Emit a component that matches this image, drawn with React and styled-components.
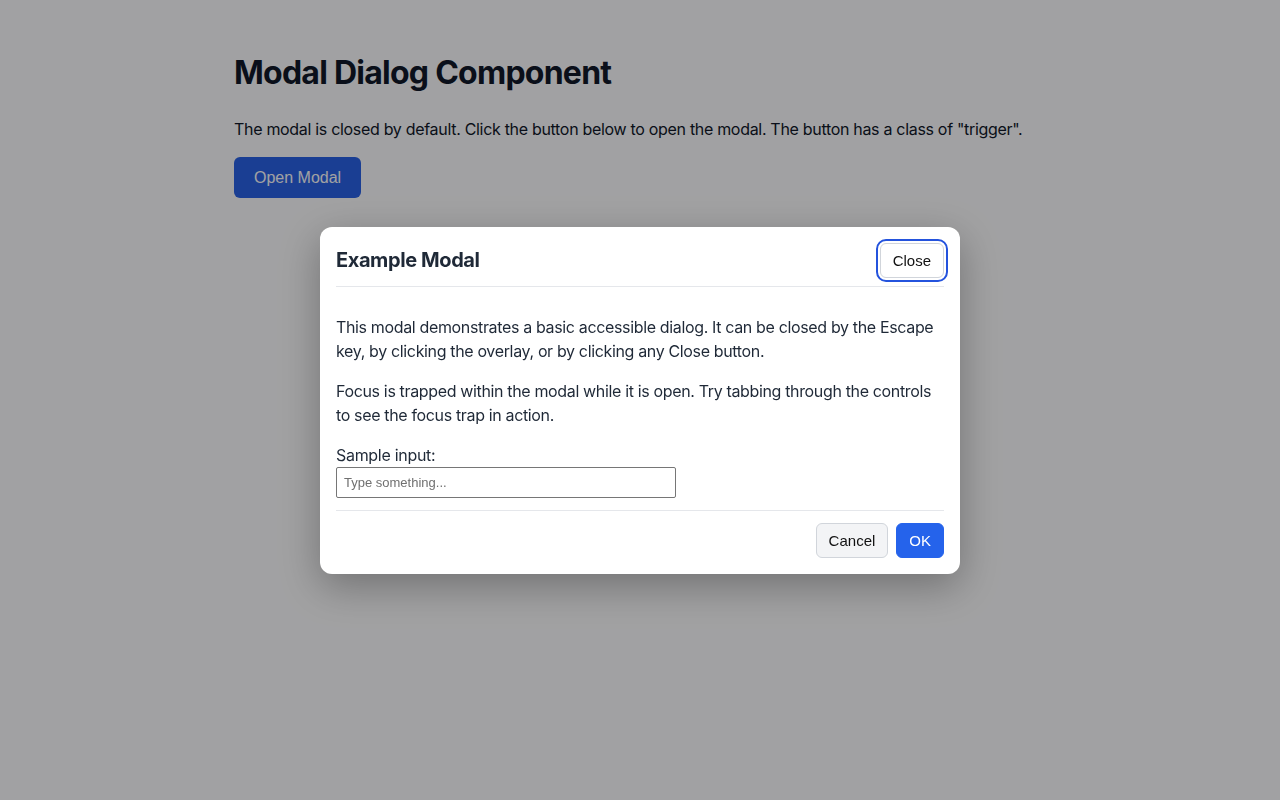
import React from "react";
import styled, { createGlobalStyle } from "styled-components";

const GlobalStyle = createGlobalStyle`
  * { box-sizing: border-box; }
  body {
    margin: 0;
    background: #ffffff;
    color: #111827;
    font-family: Inter, "Noto Sans", sans-serif;
  }
`;

const Page = styled.main`
  max-width: 812px;
  margin: 0 auto;
  padding-top: 54px;
`;

const Heading = styled.h1`
  margin: 0 0 25px;
  font-size: 32px;
  line-height: 38px;
  font-weight: 700;
  letter-spacing: -0.75px;
  color: #111827;
`;

const Intro = styled.p`
  margin: 0 0 16px;
  font-size: 16px;
  line-height: 24px;
  letter-spacing: -0.31px;
`;

const Trigger = styled.button`
  height: 41px;
  padding: 0 20px;
  border: none;
  border-radius: 6px;
  background: #2a63e6;
  color: #ffffff;
  font-family: "Liberation Sans", Arial, sans-serif;
  font-size: 16px;
`;

const Overlay = styled.div`
  position: fixed;
  inset: 0;
  background: rgba(0, 0, 6, 0.37);
  display: flex;
  align-items: center;
  justify-content: center;
`;

const Dialog = styled.div`
  width: 640px;
  background: #ffffff;
  border-radius: 12px;
  padding: 16px;
  box-shadow: 0 12px 40px rgba(0, 0, 0, 0.3);
  color: #1f2937;
`;

const Header = styled.div`
  display: flex;
  align-items: center;
  justify-content: space-between;
  padding-bottom: 8px;
  border-bottom: 1px solid #e5e7eb;
`;

const Title = styled.h2`
  margin: 0;
  font-size: 20px;
  font-weight: 700;
  letter-spacing: -0.4px;
  color: #1f2937;
`;

const Button = styled.button`
  height: 35px;
  padding: 0 12px;
  border-radius: 6px;
  border: 1px solid ${(p) => (p.$primary ? "#2563eb" : "#d1d5db")};
  background: ${(p) => (p.$primary ? "#2563eb" : p.$muted ? "#f3f4f6" : "#ffffff")};
  color: ${(p) => (p.$primary ? "#ffffff" : "#111111")};
  font-family: "Liberation Sans", Arial, sans-serif;
  font-size: 15px;
  outline: ${(p) => (p.$focused ? "2px solid #2453dd" : "none")};
  outline-offset: 2px;
`;

const Body = styled.div`
  padding: 12px 0;
`;

const Para = styled.p`
  margin: 16px 0;
  font-size: 16px;
  line-height: 24px;
  letter-spacing: -0.35px;
`;

const Label = styled.label`
  display: block;
  font-size: 16px;
  line-height: 24px;
  letter-spacing: -0.3px;
`;

const Input = styled.input`
  display: block;
  width: 340px;
  height: 31px;
  padding: 0 7px;
  border: 1px solid #767676;
  border-radius: 2px;
  font-family: "Liberation Sans", Arial, sans-serif;
  font-size: 13px;
  &::placeholder { color: #707070; }
`;

const Footer = styled.div`
  display: flex;
  justify-content: flex-end;
  gap: 8px;
  padding-top: 12px;
  border-top: 1px solid #e5e7eb;
`;

export default function App() {
  return (
    <>
      <GlobalStyle />
      <Page>
        <Heading>Modal Dialog Component</Heading>
        <Intro>
          The modal is closed by default. Click the button below to open the modal. The button has a class of "trigger".
        </Intro>
        <Trigger className="trigger">Open Modal</Trigger>
      </Page>
      <Overlay>
        <Dialog role="dialog" aria-modal="true">
          <Header>
            <Title>Example Modal</Title>
            <Button $focused>Close</Button>
          </Header>
          <Body>
            <Para>
              This modal demonstrates a basic accessible dialog. It can be closed by the Escape key, by clicking the overlay, or by clicking any Close button.
            </Para>
            <Para>
              Focus is trapped within the modal while it is open. Try tabbing through the controls to see the focus trap in action.
            </Para>
            <Label htmlFor="sample">Sample input:</Label>
            <Input id="sample" placeholder="Type something..." />
          </Body>
          <Footer>
            <Button $muted>Cancel</Button>
            <Button $primary>OK</Button>
          </Footer>
        </Dialog>
      </Overlay>
    </>
  );
}
